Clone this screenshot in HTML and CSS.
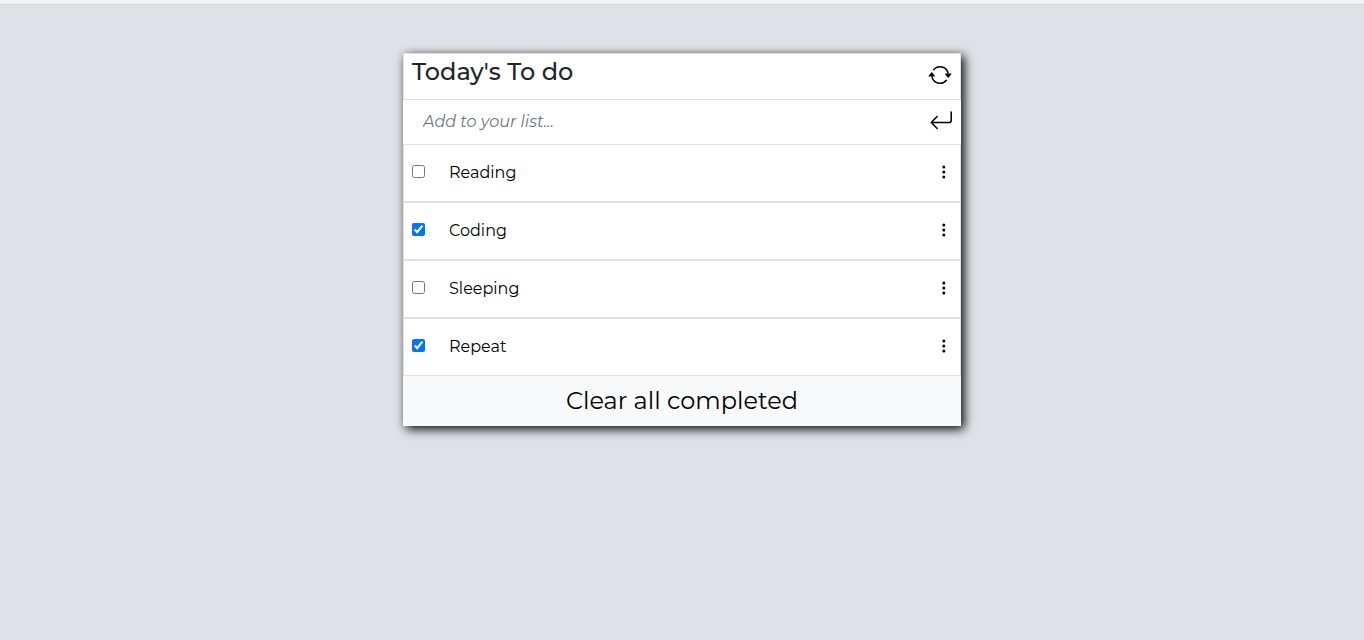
FILE: index.html
```html
<!DOCTYPE html>
<html lang="en">
<head>
<meta charset="utf-8">
<meta name="viewport" content="width=device-width, initial-scale=1">
<title>To do list</title>
<link rel="stylesheet" href="styles.css">
</head>
<body>
<div class="top-strip"></div>
<main class="card">
  <header class="card-header">
    <h1 class="title">Today's To do</h1>
    <button class="icon-button" type="button" aria-label="Refresh">
      <svg width="24" height="24" viewBox="0 0 16 16" fill="currentColor"><path d="M11.534 7h3.932a.25.25 0 0 1 .192.41l-1.966 2.36a.25.25 0 0 1-.384 0l-1.966-2.36a.25.25 0 0 1 .192-.41zm-11 2h3.932a.25.25 0 0 0 .192-.41L2.692 6.23a.25.25 0 0 0-.384 0L.342 8.59A.25.25 0 0 0 .534 9z"/><path fill-rule="evenodd" d="M8 3c-1.552 0-2.94.707-3.857 1.818a.5.5 0 1 1-.771-.636A6.002 6.002 0 0 1 13.917 7H12.9A5.002 5.002 0 0 0 8 3zM3.1 9a5.002 5.002 0 0 0 8.757 2.182.5.5 0 1 1 .771.636A6.002 6.002 0 0 1 2.083 9H3.1z"/></svg>
    </button>
  </header>
  <form class="add-form">
    <input class="add-input" type="text" placeholder="Add to your list..." aria-label="Add to your list">
    <button class="icon-button" type="button" aria-label="Add">
      <svg width="24" height="24" viewBox="0 0 24 24" fill="none" stroke="currentColor" stroke-width="1.5" stroke-linecap="round" stroke-linejoin="round"><path d="M22.2 3v8.5a2 2 0 0 1-2 2H2.2M8.2 7.5l-6 6 6 6"/></svg>
    </button>
  </form>
  <ul class="list">
    <li class="item">
      <label class="task"><input class="check" type="checkbox">Reading</label>
      <button class="icon-button" type="button" aria-label="Reading options"><svg width="16" height="16" viewBox="0 0 16 16" fill="currentColor"><circle cx="7.8" cy="3" r="1.5"/><circle cx="7.8" cy="8" r="1.5"/><circle cx="7.8" cy="13" r="1.5"/></svg></button>
    </li>
    <li class="item">
      <label class="task"><input class="check" type="checkbox" checked>Coding</label>
      <button class="icon-button" type="button" aria-label="Coding options"><svg width="16" height="16" viewBox="0 0 16 16" fill="currentColor"><circle cx="7.8" cy="3" r="1.5"/><circle cx="7.8" cy="8" r="1.5"/><circle cx="7.8" cy="13" r="1.5"/></svg></button>
    </li>
    <li class="item">
      <label class="task"><input class="check" type="checkbox">Sleeping</label>
      <button class="icon-button" type="button" aria-label="Sleeping options"><svg width="16" height="16" viewBox="0 0 16 16" fill="currentColor"><circle cx="7.8" cy="3" r="1.5"/><circle cx="7.8" cy="8" r="1.5"/><circle cx="7.8" cy="13" r="1.5"/></svg></button>
    </li>
    <li class="item">
      <label class="task"><input class="check" type="checkbox" checked>Repeat</label>
      <button class="icon-button" type="button" aria-label="Repeat options"><svg width="16" height="16" viewBox="0 0 16 16" fill="currentColor"><circle cx="7.8" cy="3" r="1.5"/><circle cx="7.8" cy="8" r="1.5"/><circle cx="7.8" cy="13" r="1.5"/></svg></button>
    </li>
  </ul>
  <button class="clear" type="button">Clear all completed</button>
</main>
</body>
</html>
```
FILE: styles.css
```css
* { box-sizing: border-box; }
body {
  margin: 0;
  min-height: 100vh;
  background: #dee2e6;
  color: #212529;
  font-family: Montserrat, Inter, "Liberation Sans", sans-serif;
  font-size: 16px;
  line-height: 24px;
}
.top-strip {
  height: 5px;
  background: #f2f2f2;
  border-bottom: 1px solid #d3d5d7;
}
.card {
  width: 90%;
  max-width: 558px;
  margin: 48px auto;
  background: #fff;
  box-shadow: 3px 3px 10px #000;
}
.card-header {
  display: flex;
  justify-content: space-between;
  align-items: flex-start;
  padding: 3px 8px 12px;
  border: 1px solid #dee2e6;
}
.title {
  margin: 0;
  font-size: 24px;
  line-height: 29px;
  font-weight: 500;
}
.icon-button {
  display: flex;
  padding: 0;
  border: 0;
  background: none;
  color: #000;
}
.card-header .icon-button { padding-top: 6px; }
.add-form {
  display: flex;
  align-items: center;
  padding: 0 8px 2px 20px;
}
.add-input {
  flex: 1;
  min-width: 0;
  height: 42px;
  padding: 0;
  border: 0;
  outline: 0;
  background: none;
  font: inherit;
}
.add-input::placeholder {
  color: #6c757d;
  font-style: italic;
  opacity: 1;
}
.list {
  margin: 0;
  padding: 0;
  list-style: none;
}
.item {
  display: flex;
  justify-content: space-between;
  align-items: center;
  height: 58px;
  padding: 0 8px;
  border: 1px solid #dee2e6;
}
.item .icon-button { padding-bottom: 2px; }
.task {
  display: flex;
  align-items: center;
  gap: 24px;
  color: #000;
}
.check {
  width: 13px;
  height: 13px;
  margin: 0 0 4px;
  accent-color: #0075ff;
}
.clear {
  display: block;
  width: 100%;
  height: 50px;
  padding: 0;
  border: 0;
  background: #f8f9fa;
  color: #000;
  font: inherit;
  font-size: 24px;
}
```
